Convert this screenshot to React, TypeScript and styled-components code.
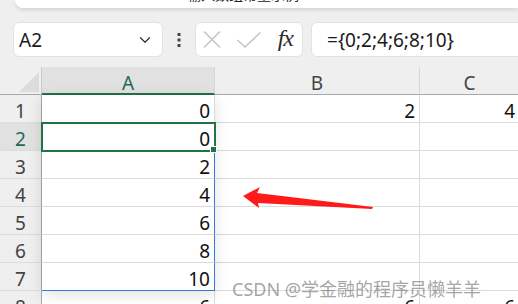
import React from "react";
import styled, { createGlobalStyle } from "styled-components";
import { ChevronDown } from "lucide-react";

const Global = createGlobalStyle`
  html, body { margin: 0; padding: 0; background: #efefef; }
  body { font-family: "Noto Sans", "Liberation Sans", sans-serif; }
`;

const Page = styled.div`
  position: relative;
  width: 518px;
  height: 304px;
  overflow: hidden;
  background: #efefef;
`;

const TopStrip = styled.div`
  margin-left: 15px;
  height: 8px;
  background: #ffffff;
  border-bottom-left-radius: 8px;
  box-shadow: 0 2px 4px rgba(0, 0, 0, 0.12);
  overflow: hidden;
  padding-left: 172px;
`;

const ClippedTitle = styled.div`
  margin-top: -14px;
  font-size: 14px;
  line-height: 16px;
  color: #222;
  font-family: "Noto Sans CJK SC", sans-serif;
`;

const FormulaBar = styled.div`
  margin-top: 14px;
  height: 35px;
  display: flex;
  align-items: stretch;
  padding-left: 13px;
`;

const Field = styled.div`
  background: #ffffff;
  border: 1px solid #e2e2e2;
  border-radius: 6px;
  box-sizing: border-box;
  display: flex;
  align-items: center;
`;

const NameBox = styled(Field)`
  width: 150px;
  padding: 0 8px 0 5px;
  justify-content: space-between;
  font-size: 19px;
  color: #1a1a1a;
`;

const Dots = styled.div`
  width: 32px;
  display: flex;
  align-items: center;
  justify-content: center;
`;

const ButtonGroup = styled(Field)`
  width: 108px;
  padding: 0 4px 0 7px;
  justify-content: space-between;
`;

const Fx = styled.span`
  font-family: "Liberation Serif", serif;
  font-style: italic;
  font-size: 24px;
  color: #2a2a2a;
  letter-spacing: -1px;
  padding-right: 5px;
  margin-top: -2px;
`;

const FormulaInput = styled(Field)`
  flex: 1;
  margin-left: 8px;
  margin-right: -10px;
  padding-left: 15px;
  font-size: 19px;
  color: #1a1a1a;
`;

const Sheet = styled.div`
  margin-top: 10px;
  display: grid;
  grid-template-columns: 42px 173px 205px 100px;
  grid-auto-rows: 28px;
  position: relative;
`;

const Corner = styled.div`
  background: #efefef;
  border-right: 1px solid #c8c8c8;
  border-bottom: 1px solid #a9a9a9;
  box-sizing: border-box;
  position: relative;
  svg { position: absolute; right: 2px; bottom: 2px; }
`;

const ColHead = styled.div<{ $active?: boolean }>`
  box-sizing: border-box;
  background: ${(p) => (p.$active ? "#e1e1e1" : "#efefef")};
  border-right: 1px solid #d6d6d6;
  border-bottom: ${(p) => (p.$active ? "2px solid #217346" : "1px solid #a9a9a9")};
  color: ${(p) => (p.$active ? "#1d6b55" : "#444")};
  font-size: 19px;
  display: flex;
  align-items: center;
  justify-content: center;
  padding-top: 5px;
`;

const RowHead = styled.div<{ $active?: boolean }>`
  box-sizing: border-box;
  background: ${(p) => (p.$active ? "#e1e1e1" : "#efefef")};
  border-right: 1px solid #a9a9a9;
  border-bottom: 1px solid #dcdcdc;
  color: ${(p) => (p.$active ? "#1d6b55" : "#444")};
  font-size: 19px;
  display: flex;
  align-items: center;
  justify-content: center;
  padding-top: 4px;
`;

const Cell = styled.div<{ $active?: boolean; $spillRight?: boolean; $spillBottom?: boolean }>`
  box-sizing: border-box;
  position: relative;
  background: #ffffff;
  border-right: 1px solid ${(p) => (p.$spillRight ? "#3a78d8" : "#dadada")};
  border-bottom: 1px solid ${(p) => (p.$spillBottom ? "#3a78d8" : "#dadada")};
  font-size: 19px;
  color: #111;
  display: flex;
  align-items: center;
  justify-content: flex-end;
  padding: 5px 4px 0 0;
  ${(p) =>
    p.$active &&
    `
    outline: 2px solid #217346;
    outline-offset: -1px;
    z-index: 2;
    &::after {
      content: "";
      position: absolute;
      right: -3px;
      bottom: -3px;
      width: 5px;
      height: 5px;
      background: #217346;
      border: 1px solid #fff;
    }
  `}
`;

const FloatShadow = styled.div`
  position: absolute;
  left: 42px;
  top: 28px;
  width: 173px;
  height: 196px;
  box-shadow: 0 3px 14px rgba(0, 0, 0, 0.12);
  pointer-events: none;
  z-index: 1;
`;

const Watermark = styled.div`
  position: absolute;
  left: 232px;
  top: 275px;
  font-size: 18px;
  color: rgba(120, 120, 120, 0.68);
  font-family: "Noto Sans", "Noto Sans CJK SC", sans-serif;
  white-space: nowrap;
  z-index: 5;
`;

const ArrowLayer = styled.svg`
  position: absolute;
  left: 0;
  top: 0;
  z-index: 6;
  pointer-events: none;
`;

const colA = [0, 0, 2, 4, 6, 8, 10, 6];
const colB: (number | null)[] = [2, null, null, null, null, null, null, 6];
const colC: (number | null)[] = [4, null, null, null, null, null, null, 6];

export default function App() {
  return (
    <>
      <Global />
      <Page>
        <TopStrip>
          <ClippedTitle>输入数组常量示例</ClippedTitle>
        </TopStrip>
        <FormulaBar>
          <NameBox>
            <span>A2</span>
            <ChevronDown size={18} strokeWidth={1.6} color="#333" />
          </NameBox>
          <Dots>
            <svg width="4" height="14" viewBox="0 0 4 14">
              <rect x="0.5" y="0" width="3" height="3" fill="#444" />
              <rect x="0.5" y="5.5" width="3" height="3" fill="#444" />
              <rect x="0.5" y="11" width="3" height="3" fill="#444" />
            </svg>
          </Dots>
          <ButtonGroup>
            <svg width="18" height="17" viewBox="0 0 18 17">
              <path d="M1 0.5 L17 16.5 M17 0.5 L1 16.5" stroke="#c2c2c2" strokeWidth="1.4" fill="none" />
            </svg>
            <svg width="24" height="16" viewBox="0 0 24 16">
              <path d="M0.5 8 L8 15 L23.5 0.5" stroke="#c2c2c2" strokeWidth="1.4" fill="none" />
            </svg>
            <Fx>fx</Fx>
          </ButtonGroup>
          <FormulaInput>={"{"}0;2;4;6;8;10{"}"}</FormulaInput>
        </FormulaBar>
        <Sheet>
          <Corner>
            <svg width="20" height="20" viewBox="0 0 20 20">
              <polygon points="20,0 20,20 0,20" fill="#dcdcdc" />
            </svg>
          </Corner>
          <ColHead $active>A</ColHead>
          <ColHead>B</ColHead>
          <ColHead>C</ColHead>
          {colA.map((v, i) => (
            <React.Fragment key={i}>
              <RowHead $active={i === 1}>{i + 1}</RowHead>
              <Cell
                $active={i === 1}
                $spillRight={i >= 2 && i <= 6}
                $spillBottom={i === 6}
              >
                {v}
              </Cell>
              <Cell>{colB[i] ?? ""}</Cell>
              <Cell>{colC[i] ?? ""}</Cell>
            </React.Fragment>
          ))}
          <FloatShadow />
        </Sheet>
        <Watermark>CSDN @学金融的程序员懒羊羊</Watermark>
        <ArrowLayer width="518" height="304" viewBox="0 0 518 304">
          <polygon
            points="243,196 260,187 257,193 373,207 372,209 258,203 259,208"
            fill="#ff1a1a"
          />
        </ArrowLayer>
      </Page>
    </>
  );
}
